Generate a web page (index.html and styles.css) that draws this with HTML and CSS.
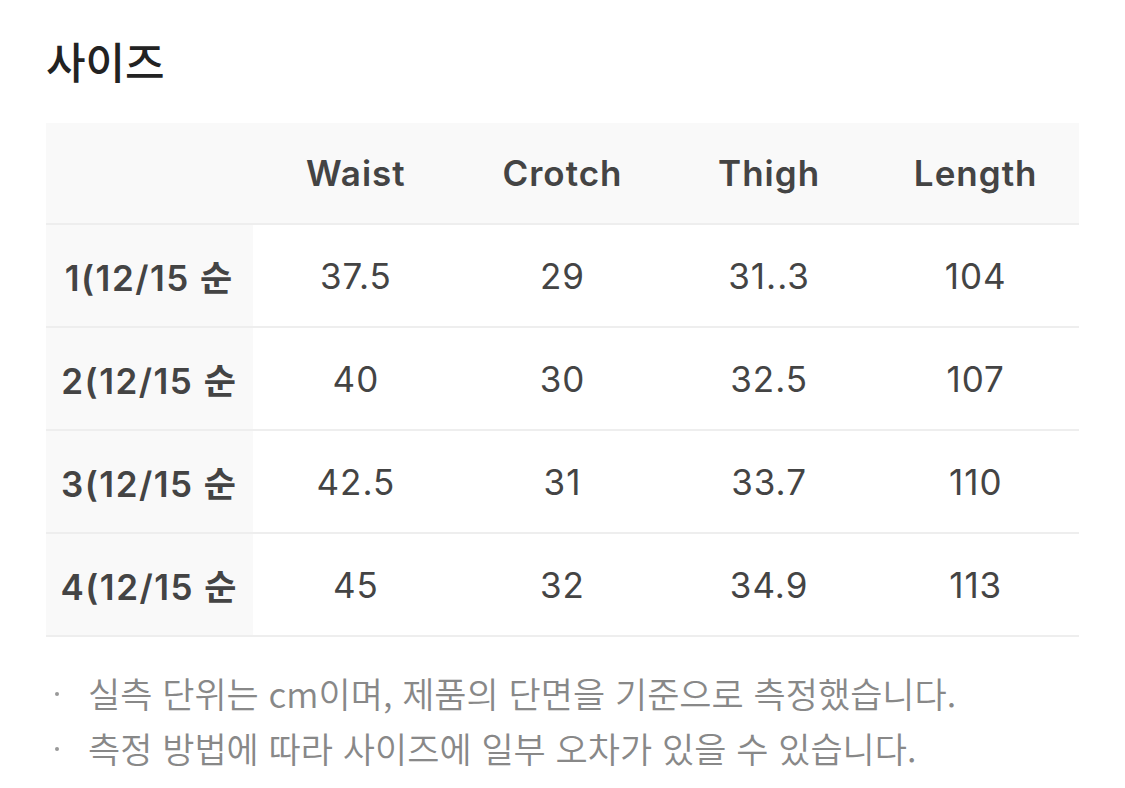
FILE: index.html
```html
<!DOCTYPE html>
<html lang="ko">
<head>
<meta charset="utf-8">
<link rel="stylesheet" href="styles.css">
</head>
<body>
<div class="page">
  <h2 class="title">사이즈</h2>
  <div class="table">
    <div class="row head">
      <div class="cell label"></div>
      <div class="cell">Waist</div>
      <div class="cell">Crotch</div>
      <div class="cell">Thigh</div>
      <div class="cell">Length</div>
    </div>
    <div class="row">
      <div class="cell label">1(12/15 순</div>
      <div class="cell">37.5</div>
      <div class="cell">29</div>
      <div class="cell">31..3</div>
      <div class="cell">104</div>
    </div>
    <div class="row">
      <div class="cell label">2(12/15 순</div>
      <div class="cell">40</div>
      <div class="cell">30</div>
      <div class="cell">32.5</div>
      <div class="cell">107</div>
    </div>
    <div class="row">
      <div class="cell label">3(12/15 순</div>
      <div class="cell">42.5</div>
      <div class="cell">31</div>
      <div class="cell">33.7</div>
      <div class="cell">110</div>
    </div>
    <div class="row">
      <div class="cell label">4(12/15 순</div>
      <div class="cell">45</div>
      <div class="cell">32</div>
      <div class="cell">34.9</div>
      <div class="cell">113</div>
    </div>
  </div>
  <ul class="notes">
    <li>실측 단위는 cm이며, 제품의 단면을 기준으로 측정했습니다.</li>
    <li>측정 방법에 따라 사이즈에 일부 오차가 있을 수 있습니다.</li>
  </ul>
</div>
</body>
</html>
```

FILE: styles.css
```css
html, body {
  margin: 0;
  padding: 0;
  background: #ffffff;
}
body {
  font-family: Inter, "Noto Sans CJK KR", sans-serif;
  color: #444444;
}
.page {
  padding: 32px 46px 0 46px;
}
.title {
  margin: 0;
  font-size: 43px;
  font-weight: 500;
  color: #222222;
  line-height: 56px;
  font-family: "Noto Sans CJK KR", sans-serif;
}
.table {
  margin-top: 35px;
  width: 1033px;
}
.row {
  display: grid;
  grid-template-columns: repeat(5, 1fr);
  height: 101px;
  border-bottom: 2px solid #eeeeee;
}
.cell {
  display: flex;
  align-items: center;
  justify-content: center;
  font-size: 35px;
  letter-spacing: 1px;
  white-space: nowrap;
  overflow: hidden;
}
.head {
  background: #f9f9f9;
  height: 100px;
}
.head .cell {
  font-weight: 600;
  color: #444444;
}
.label {
  background: #f9f9f9;
  font-weight: 600;
  letter-spacing: 1.5px;
}
.notes {
  list-style: none;
  margin: 28px 0 0 0;
  padding: 0;
}
.notes li {
  position: relative;
  padding-left: 42px;
  font-size: 35px;
  line-height: 55px;
  color: #888888;
  font-family: "Noto Sans CJK KR", sans-serif;
  font-weight: 350;
}
.notes li::before {
  content: "";
  position: absolute;
  left: 9px;
  top: 27px;
  width: 4px;
  height: 4px;
  border-radius: 50%;
  background: #999999;
}
```
